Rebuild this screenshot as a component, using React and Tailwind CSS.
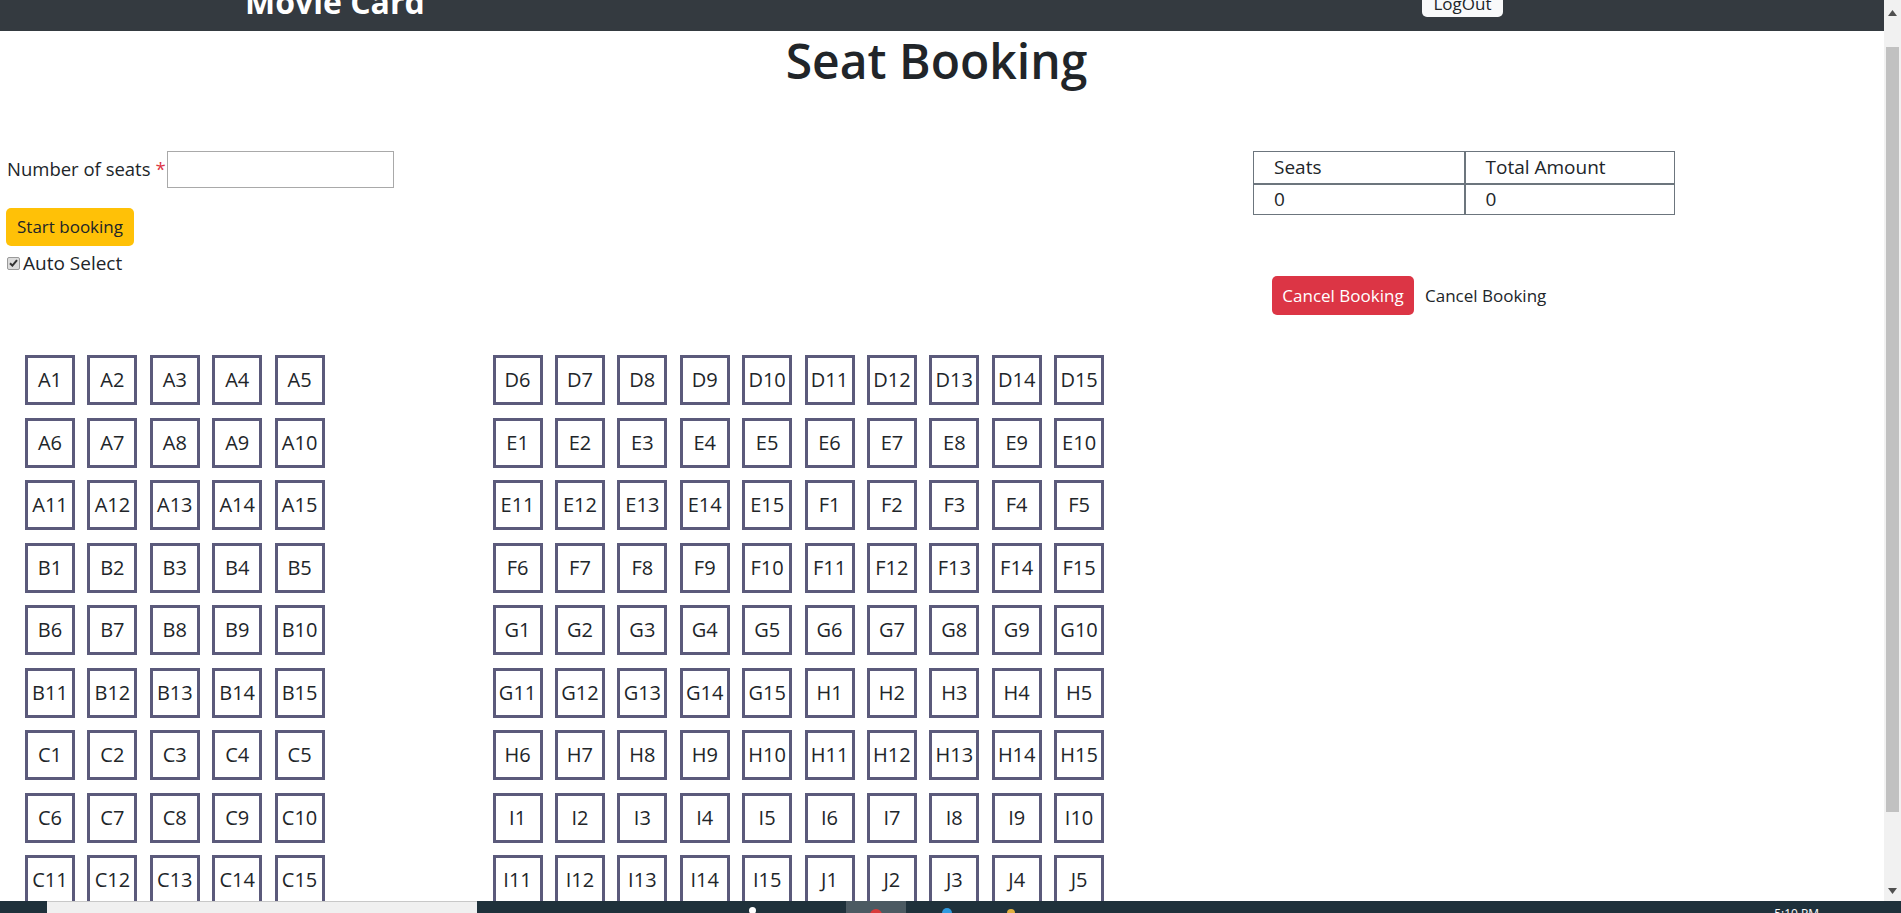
import React from "react";

const leftSeats = ["A", "B", "C"].flatMap((row) =>
    Array.from({ length: 15 }, (_, i) => `${row}${i + 1}`)
);

const rightSeats = ["D", "E", "F", "G", "H", "I", "J"]
    .flatMap((row) => Array.from({ length: 15 }, (_, i) => `${row}${i + 1}`))
    .slice(5, 95);

const Seat = ({ label }) => (
    <div className="w-[50px] h-[50px] border-[3px] border-[#5b5a7b] flex items-center justify-center text-[20px] leading-none">
        {label}
    </div>
);

const Scrollbar = () => (
    <div className="w-[17px] shrink-0 bg-[#f1f1f1] flex flex-col items-center">
        <svg width="9" height="6" viewBox="0 0 9 6" className="mt-[10px]">
            <path d="M4.5 0 L9 6 L0 6 Z" fill="#505050" />
        </svg>
        <div className="mt-[31px] w-[13px] h-[765px] bg-[#c1c1c1]" />
        <div className="flex-1" />
        <svg width="9" height="6" viewBox="0 0 9 6" className="mb-[7px]">
            <path d="M0 0 L9 0 L4.5 6 Z" fill="#505050" />
        </svg>
    </div>
);

const Taskbar = () => (
    <div className="h-[12px] shrink-0 flex bg-[#1f313b] overflow-hidden">
        <div className="w-[47px]" />
        <div className="w-[430px] bg-[#f0f0f0] border-t border-[#c8c8c8]" />
        <div className="w-[272px]" />
        <div className="w-[7px] h-[7px] rounded-full bg-white mt-[6px]" />
        <div className="w-[90px]" />
        <div className="w-[60px] bg-[#4c5a62] flex justify-center">
            <div className="w-[12px] h-[12px] rounded-full bg-[#d93a3a] mt-[8px]" />
        </div>
        <div className="w-[36px]" />
        <div className="w-[10px] h-[10px] rounded-full bg-[#2f9be0] mt-[7px]" />
        <div className="w-[55px]" />
        <div className="w-[8px] h-[8px] rounded-full bg-[#e0b040] mt-[8px]" />
        <div className="flex-1" />
        <span className="text-white text-[12px] leading-none mt-[7px] mr-[82px]">5:10 PM</span>
    </div>
);

const App = () => {
    return (
        <div className="h-screen flex flex-col overflow-hidden bg-white text-[#212529] font-['Open_Sans',sans-serif]">
            <div className="flex flex-1 min-h-0">
                <div className="flex-1 min-w-0 overflow-hidden">
                    {/* navbar */}
                    <nav className="h-[31px] bg-[#343a40] flex items-start overflow-hidden pl-[245px]">
                        <span className="text-white font-bold text-[32px] leading-[32px] -mt-[14px]">Movie Card</span>
                        <button className="ml-auto mr-[381px] -mt-[21px] h-[38px] w-[81px] bg-[#f8f9fa] rounded-[5px] text-[17px] leading-none pt-[10px]">
                            LogOut
                        </button>
                    </nav>

                    <h1 className="text-center text-[48px] font-semibold leading-[60px] pr-[11px]">Seat Booking</h1>

                    <div className="flex items-start mt-[59px]">
                        {/* booking form */}
                        <div className="w-[1253px] pl-[6px]">
                            <div className="flex items-center h-[38px]">
                                <label className="text-[18.5px] pl-[1px]">Number of seats</label>
                                <span className="text-[#dc3545] text-[18.5px] ml-[5px]">*</span>
                                <input className="w-[227px] h-[37px] ml-[1px] border border-[#a9a9a9] outline-none" />
                            </div>
                            <button className="mt-[20px] h-[38px] px-[11px] bg-[#ffc107] rounded-[5px] text-[17px]">
                                Start booking
                            </button>
                            <div className="flex items-center h-[30px] mt-[2px] pl-[1px]">
                                <span className="w-[13px] h-[13px] bg-[#dcdcdc] border border-[#9a9a9a] rounded-[2px] flex items-center justify-center">
                                    <svg width="9" height="8" viewBox="0 0 9 8">
                                        <path d="M1 4.2 L3.4 6.6 L8 1.2" stroke="#333" strokeWidth="2" fill="none" />
                                    </svg>
                                </span>
                                <span className="text-[19px] ml-[3px]">Auto Select</span>
                            </div>
                        </div>

                        {/* summary */}
                        <div>
                            <table className="w-[422px] border-collapse border border-[#6c757d] text-[19px] mt-[1px]">
                                <thead>
                                    <tr className="h-[32px]">
                                        <th className="font-normal text-left pl-[20px] border-b-2 border-r-2 border-[#6c757d] w-[211px]">Seats</th>
                                        <th className="font-normal text-left pl-[20px] border-b-2 border-[#6c757d]">Total Amount</th>
                                    </tr>
                                </thead>
                                <tbody>
                                    <tr className="h-[31px]">
                                        <td className="pl-[20px] border-r-2 border-[#6c757d]">0</td>
                                        <td className="pl-[20px]">0</td>
                                    </tr>
                                </tbody>
                            </table>
                            <div className="flex items-center mt-[61px] ml-[19px]">
                                <button className="h-[39px] w-[142px] bg-[#dc3545] text-white rounded-[5px] text-[17px]">
                                    Cancel Booking
                                </button>
                                <span className="ml-[11px] text-[17px]">Cancel Booking</span>
                            </div>
                        </div>
                    </div>

                    {/* seats */}
                    <div className="flex items-start mt-[40px] pl-[25px] gap-[168px]">
                        <div className="grid grid-cols-5 gap-x-[12.4px] gap-y-[12.5px]">
                            {leftSeats.map((s) => (
                                <Seat key={s} label={s} />
                            ))}
                        </div>
                        <div className="grid grid-cols-10 gap-x-[12.4px] gap-y-[12.5px]">
                            {rightSeats.map((s) => (
                                <Seat key={s} label={s} />
                            ))}
                        </div>
                    </div>
                </div>
                <Scrollbar />
            </div>
            <Taskbar />
        </div>
    );
};

export default App;
